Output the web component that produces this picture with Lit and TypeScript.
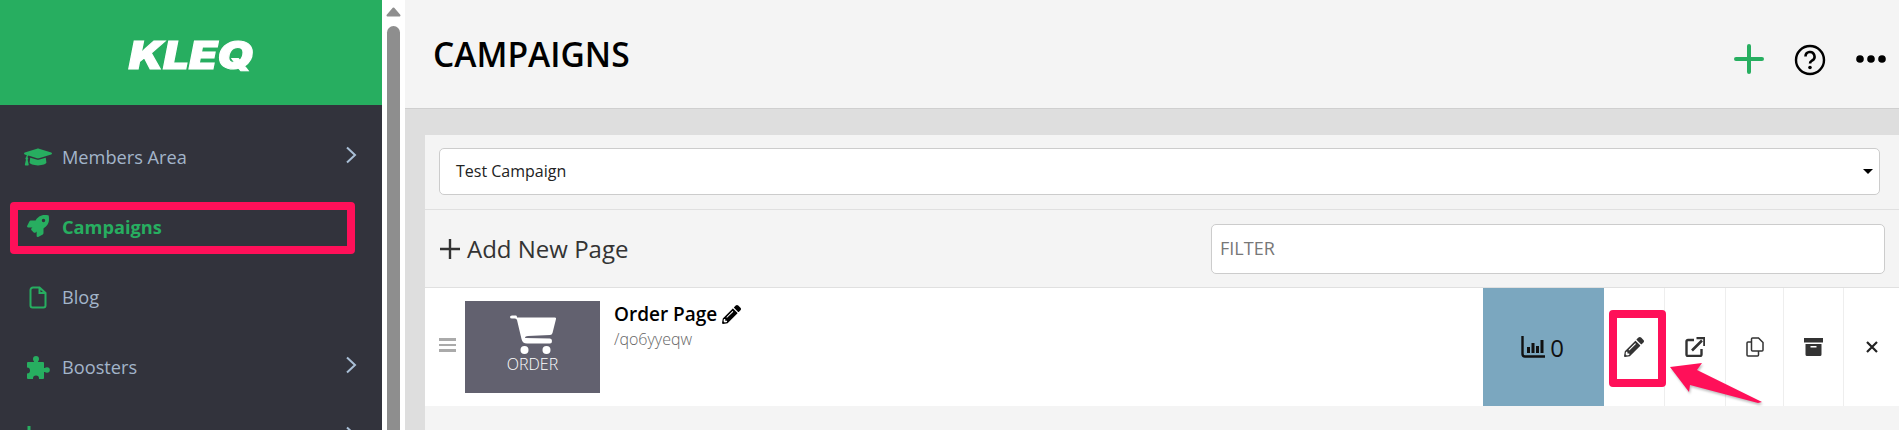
import { LitElement, html, css } from "lit";
import { customElement } from "lit/decorators.js";

const CAP = "M622.34 153.2L343.4 67.5c-15.2-4.67-31.6-4.67-46.79 0L17.66 153.2c-23.54 7.23-23.54 38.36 0 45.59l48.63 14.94c-10.67 13.19-17.23 29.28-17.88 46.9C38.78 266.15 32 276.11 32 288c0 10.78 5.68 19.85 13.86 25.65L20.33 428.53C18.11 438.52 25.71 448 35.94 448h56.11c10.24 0 17.84-9.48 15.62-19.47L82.14 313.65C90.32 307.85 96 298.78 96 288c0-11.57-6.47-21.25-15.66-26.87.76-15.02 8.44-28.3 20.69-36.72L296.6 284.5c9.06 2.78 26.44 6.25 46.79 0l278.95-85.7c23.55-7.24 23.55-38.36 0-45.6zM352.79 315.09c-28.53 8.76-52.84 3.92-65.59 0l-145.02-44.55L128 384c0 35.35 85.96 64 192 64s192-28.65 192-64l-14.18-113.47-145.03 44.56z";
const ROCKET = "M505.12 19.09c-1.19-5.53-6.66-11-12.21-12.19C460.72 0 435.51 0 410.41 0 307.18 0 245.27 55.2 199.05 128H94.84c-16.35.02-35.56 11.88-42.89 26.48L2.52 253.3A28.4 28.4 0 0 0 0 264a24 24 0 0 0 24.01 24h103.81l-22.47 22.47c-11.37 11.36-13 32.26 0 45.25l50.9 50.91c11.16 11.19 32.16 13.16 45.28 0l22.47-22.47V488a24 24 0 0 0 24.01 24 28.56 28.56 0 0 0 10.71-2.52l98.73-49.39c14.63-7.3 26.51-26.5 26.51-42.86V312.8c72.6-46.31 128.03-108.41 128.03-211.1.02-25.2.02-50.4-6.93-82.61zM384.04 168a40 40 0 1 1 40.01-40 40.02 40.02 0 0 1-40.01 40z";
const PENCIL = "M497.9 142.1l-46.1 46.1c-4.7 4.7-12.3 4.7-17 0l-111-111c-4.7-4.7-4.7-12.3 0-17l46.1-46.1c18.7-18.7 49.1-18.7 67.9 0l60.1 60.1c18.8 18.7 18.8 49.1 0 67.9zM284.2 99.8L21.6 362.4.4 483.9c-2.9 16.4 11.4 30.6 27.8 27.8l121.5-21.3 262.6-262.6c4.7-4.7 4.7-12.3 0-17l-111-111c-4.8-4.7-12.4-4.7-17.1 0zM124.1 339.9c-5.5-5.5-5.5-14.3 0-19.8l154-154c5.5-5.5 14.3-5.5 19.8 0s5.5 14.3 0 19.8l-154 154c-5.5 5.500-14.3 5.500-19.800 0zM88 424h48v36.3l-64.5 11.3-31.1-31.1L51.7 376H88v48z";
const CART = "M7 2.500L45 2.500Q46.500 2.500 46 4L42.500 18Q42 20 40 20L18 21Q15 21 15 23L40 23.500Q42 23.500 42 26Q42 28.500 40 28.500L17 28.500Q12.500 28.500 11.500 24L7 5Q6.500 3.500 5 3.500L2 3.500Q0 3.500 0 2Q0 .5 2 .5L6 .5Q7 .5 7 2.500Z";

const pencil = (size: number, color: string) => html`<svg width=${size} height=${size} viewBox="0 0 512 512"><path d=${PENCIL} fill=${color}></path></svg>`;
const chevron = html`<svg class="chev" width="12" height="18" viewBox="0 0 12 18"><path d="M2 1.500 L10 9 L2 16.500" fill="none" stroke="#a9bfd6" stroke-width="2"></path></svg>`;

const menu = [
  { label: "Members Area", kind: "cap", more: true, cls: "" },
  { label: "Campaigns", kind: "rocket", more: false, cls: "active" },
  { label: "Blog", kind: "file", more: false, cls: "" },
  { label: "Boosters", kind: "puzzle", more: true, cls: "" },
  { label: "", kind: "chart", more: true, cls: "" },
];

@customElement("app-root")
export class AppRoot extends LitElement {
  static styles = css`
    :host { display: block; width: 1899px; height: 430px; overflow: hidden; position: relative; font-family: "Open Sans", sans-serif; background: #f4f4f4; }
    .shell { display: flex; height: 430px; }
    .side { width: 382px; flex: none; background: #32333c; overflow: hidden; }
    .logo { height: 105px; background: #27ae60; display: flex; align-items: center; justify-content: center; color: #fff; font: italic 900 38px "Inter", sans-serif; }
    .logo span { display: block; transform: scaleX(1.2); -webkit-text-stroke: 1px #fff; margin-top: 5px; }
    .menu { padding-top: 17px; }
    .item { height: 70px; display: flex; align-items: center; padding: 0 25px 0 24px; color: #a3b5ca; font-size: 18.2px; font-weight: 400; }
    .item.active { color: #27ae60; font-weight: 700; }
    .ico { width: 28px; height: 28px; margin-right: 10px; display: flex; align-items: center; justify-content: center; flex: none; }
    .lbl { flex: 1; }
    .chev { margin-top: -4px; }
    .rocket { margin-top: -2px; }
    .bar { width: 23px; flex: none; background: #fff; display: flex; flex-direction: column; align-items: center; }
    .up { margin-top: 7px; flex: none; }
    .thumb { width: 13px; flex: 1; background: #8e8e8e; border-radius: 7px 7px 0 0; margin-top: 9px; }
    .main { flex: 1; min-width: 0; display: flex; flex-direction: column; background: #dedede; }
    .head { height: 109px; flex: none; box-sizing: border-box; border-bottom: 1px solid #cfcfcf; background: #f4f4f4; display: flex; align-items: center; padding-left: 28px; }
    h1 { margin: 0; font-size: 33.6px; font-weight: 600; color: #000; flex: 1; line-height: 40px; }
    .tools { display: flex; align-items: center; gap: 30px; padding-right: 13px; margin-top: 9px; }
    .help { margin-top: 2px; }
    .body { flex: 1; padding: 26px 0 0 20px; display: flex; }
    .panel { flex: 1; background: #f4f4f4; display: flex; flex-direction: column; }
    .sel-row { height: 75px; box-sizing: border-box; border-bottom: 1px solid #e0e0e0; padding: 13px 19px 0 14px; }
    .select { height: 47px; box-sizing: border-box; background: #fff; border: 1px solid #ccc; border-radius: 5px; display: flex; align-items: center; justify-content: space-between; padding: 0 6px 2px 16px; font-size: 16px; color: #222; }
    .caret { width: 0; height: 0; border-left: 5px solid transparent; border-right: 5px solid transparent; border-top: 5px solid #000; margin-top: 2px; }
    .add-row { height: 78px; box-sizing: border-box; border-bottom: 1px solid #e0e0e0; display: flex; align-items: center; justify-content: space-between; padding: 0 14px 0 15px; }
    .add { display: flex; align-items: center; gap: 7px; font-size: 24px; color: #333; }
    .filter { width: 674px; height: 50px; box-sizing: border-box; background: #fff; border: 1px solid #ccc; border-radius: 5px; display: flex; align-items: center; padding: 0 0 2px 8px; font-size: 18px; color: #777; }
    .row { height: 118px; background: #fff; display: flex; align-items: stretch; }
    .grip { width: 40px; flex: none; box-sizing: border-box; padding: 50px 0 0 14px; }
    .grip i { display: block; width: 17px; height: 2.500px; background: #aaa; margin-bottom: 3.200px; }
    .thumbn { width: 135px; height: 92px; margin-top: 13px; background: #62616f; color: #fff; display: flex; flex-direction: column; align-items: center; padding-top: 14px; box-sizing: border-box; font-size: 16px; line-height: 20px; font-weight: 300; }
    .info { flex: 1; padding: 14px 0 0 14px; }
    .name { display: flex; align-items: center; gap: 5px; font-size: 19px; font-weight: 600; color: #000; line-height: 24px; }
    .slug { font-size: 16px; color: #666; line-height: 24px; font-weight: 300; margin-top: 1px; }
    .stat { width: 121px; flex: none; background: #7ba7bf; display: flex; align-items: center; justify-content: center; gap: 5px; font-size: 24px; font-weight: 500; color: #111; padding-right: 2px; box-sizing: border-box; }
    .act { flex: none; box-sizing: border-box; display: flex; align-items: center; justify-content: center; border-right: 1px solid #eee; }
    .act:last-child { border-right: 0; }
    .anno { position: absolute; box-sizing: border-box; border: 8px solid #ff1059; border-radius: 4px; }
    .a1 { left: 10px; top: 202px; width: 345px; height: 52px; }
    .a2 { left: 1609px; top: 310px; width: 57px; height: 77px; }
    .arrow { position: absolute; left: 1660px; top: 355px; filter: drop-shadow(1px 2px 1px rgba(0,0,0,.25)); }
  `;

  icon(kind: string) {
    switch (kind) {
      case "cap":
        return html`<svg width="28" height="28" viewBox="0 0 640 512"><path d=${CAP} fill="#27ae60"></path></svg>`;
      case "rocket":
        return html`<svg class="rocket" width="22" height="22" viewBox="0 0 512 512"><path d=${ROCKET} fill="#27ae60"></path></svg>`;
      case "file":
        return html`<svg width="18" height="23" viewBox="0 0 18 23"><path d="M4 1.500h6.500L16.500 7v12.500a2 2 0 0 1-2 2H3.500a2 2 0 0 1-2-2V4a2.500 2.500 0 0 1 2.500-2.500z M10.500 1.500V7h6" fill="none" stroke="#27ae60" stroke-width="2"></path></svg>`;
      case "puzzle":
        return html`<svg width="23" height="23" viewBox="0 0 23 23"><rect x="0" y="6" width="17" height="17" rx="1" fill="#27ae60"></rect><rect x="7" y="3" width="4" height="4" fill="#27ae60"></rect><circle cx="9" cy="3" r="3" fill="#27ae60"></circle><rect x="16" y="12" width="3" height="4" fill="#27ae60"></rect><circle cx="20" cy="14" r="2.800" fill="#27ae60"></circle><circle cx="0" cy="14.500" r="3" fill="#32333c"></circle><circle cx="9" cy="22.500" r="3" fill="#32333c"></circle></svg>`;
      default:
        return html`<svg width="22" height="22" viewBox="0 0 22 22"><path d="M2 0v20h20M7 14v5M12 9v10M17 4v15" fill="none" stroke="#27ae60" stroke-width="3"></path></svg>`;
    }
  }

  render() {
    return html`
      <div class="shell">
        <nav class="side">
          <div class="logo"><span>KLEQ</span></div>
          <div class="menu">
            ${menu.map((m) => html`<div class="item ${m.cls}"><span class="ico">${this.icon(m.kind)}</span><span class="lbl">${m.label}</span>${m.more ? chevron : ""}</div>`)}
          </div>
        </nav>
        <div class="bar">
          <svg class="up" width="15" height="10" viewBox="0 0 15 10"><path d="M7.500 1.500 L13.500 8.500 H1.500 Z" fill="#8e8e8e" stroke="#8e8e8e" stroke-width="2" stroke-linejoin="round"></path></svg>
          <div class="thumb"></div>
        </div>
        <div class="main">
          <header class="head">
            <h1>CAMPAIGNS</h1>
            <div class="tools">
              <svg width="30" height="30" viewBox="0 0 30 30"><path d="M15 2v26M2 15h26" stroke="#27ae60" stroke-width="4" stroke-linecap="round"></path></svg>
              <svg class="help" width="32" height="32" viewBox="0 0 32 32"><circle cx="16" cy="16" r="14" fill="none" stroke="#000" stroke-width="2.400"></circle><path d="M11.500 12.500a4.500 4.500 0 1 1 6.600 4c-1.500.9-2.100 1.600-2.100 3" fill="none" stroke="#000" stroke-width="2.600"></path><circle cx="16" cy="23.500" r="1.800" fill="#000"></circle></svg>
              <svg width="30" height="10" viewBox="0 0 30 10"><circle cx="4" cy="5" r="3.800"></circle><circle cx="15" cy="5" r="3.800"></circle><circle cx="26" cy="5" r="3.800"></circle></svg>
            </div>
          </header>
          <div class="body">
            <section class="panel">
              <div class="sel-row"><div class="select"><span>Test Campaign</span><i class="caret"></i></div></div>
              <div class="add-row">
                <div class="add"><svg width="20" height="20" viewBox="0 0 20 20"><path d="M10 0v20M0 10h20" stroke="#333" stroke-width="2.400"></path></svg>Add New Page</div>
                <div class="filter">FILTER</div>
              </div>
              <div class="row">
                <div class="grip"><i></i><i></i><i></i></div>
                <div class="thumbn">
                  <svg width="46" height="39" viewBox="0 0 46 39"><path d=${CART} fill="#fff"></path><circle cx="14.500" cy="35" r="4" fill="#fff"></circle><circle cx="36.500" cy="35" r="4" fill="#fff"></circle></svg>
                  <span>ORDER</span>
                </div>
                <div class="info">
                  <div class="name">Order Page ${pencil(19, "#000")}</div>
                  <div class="slug">/qo6yyeqw</div>
                </div>
                <div class="stat"><svg width="24" height="22" viewBox="0 0 24 22"><path d="M1.500 0v18a2.500 2.500 0 0 0 2.500 2.500h20" fill="none" stroke="#111" stroke-width="2.400"></path><path d="M6 11h3v6H6zM10.500 7h3v10h-3zM15 10h3v7h-3zM19.500 4h3v13h-3z" fill="#111"></path></svg><span>0</span></div>
                <div class="act" style="width:61px">${pencil(20, "#333")}</div>
                <div class="act" style="width:61px"><svg width="20" height="20" viewBox="0 0 20 20"><path d="M9 3H3a1.500 1.500 0 0 0-1.500 1.500v13A1.500 1.500 0 0 0 3 19h12a1.500 1.500 0 0 0 1.500-1.500V12" fill="none" stroke="#333" stroke-width="2.400"></path><path d="M7 13.500 17 3.500M11.500 1h8v8" fill="none" stroke="#333" stroke-width="2.600"></path></svg></div>
                <div class="act" style="width:58px"><svg width="18" height="20" viewBox="0 0 18 20"><path d="M6.500 1h6l4.500 4.500V13a1 1 0 0 1-1 1H6.500a1 1 0 0 1-1-1V2a1 1 0 0 1 1-1zM5.500 5H2a1 1 0 0 0-1 1v12a1 1 0 0 0 1 1h9.500a1 1 0 0 0 1-1v-4" fill="none" stroke="#333" stroke-width="1.500"></path></svg></div>
                <div class="act" style="width:60px"><svg width="20" height="18" viewBox="0 0 20 18"><path d="M0 0h19v4.500H0zM1.500 6h16v10.500a1.500 1.500 0 0 1-1.500 1.500H3a1.500 1.500 0 0 1-1.500-1.500z" fill="#333"></path><rect x="6.500" y="8" width="6" height="1.500" fill="#fff"></rect></svg></div>
                <div class="act" style="width:55px"><svg width="12" height="12" viewBox="0 0 12 12"><path d="M1 1l10 10M11 1 1 11" stroke="#222" stroke-width="2.200"></path></svg></div>
              </div>
            </section>
          </div>
        </div>
      </div>
      <div class="anno a1"></div>
      <div class="anno a2"></div>
      <svg class="arrow" width="105" height="50" viewBox="0 0 105 50"><path d="M10 12 L42 8 L37 15 L102 47 L98 48 L30 30 L29 37 Z" fill="#ff1059"></path></svg>
    `;
  }
}
